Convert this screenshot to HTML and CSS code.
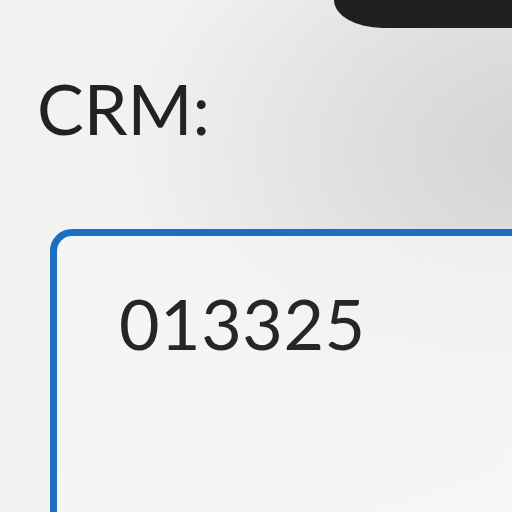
FILE: index.html
```html
<!DOCTYPE html>
<html>
<head>
<meta charset="utf-8">
<link rel="stylesheet" href="styles.css">
</head>
<body>
<div class="page">
  <div class="topbar"><div class="pill"></div></div>
  <label class="label">CRM:</label>
  <div class="field"><span class="value">013325</span></div>
</div>
</body>
</html>
```
FILE: styles.css
```css
html, body {
  margin: 0;
  padding: 0;
  width: 512px;
  height: 512px;
  overflow: hidden;
}
body {
  background-color: #f2f2f2;
  background-image: radial-gradient(ellipse 420px 300px at 540px 150px, #d3d3d3 0%, #dedede 40%, rgba(242,242,242,0) 100%);
  font-family: Lato, "Noto Sans", sans-serif;
  color: #222;
}
.page {
  display: flex;
  flex-direction: column;
}
.topbar {
  display: flex;
  justify-content: flex-end;
  height: 28px;
}
.pill {
  width: 178px;
  height: 28px;
  background: #202020;
  border-bottom-left-radius: 52px 30px;
}
.label {
  display: block;
  font-size: 70px;
  line-height: 1;
  margin: 45px 0 0 37px;
  color: #222;
}
.field {
  margin: 86px 0 0 50px;
  width: 600px;
  height: 400px;
  border: 7px solid #1b6ec0;
  border-radius: 22px;
  background: linear-gradient(160deg, rgba(246,246,246,0.7), rgba(246,246,246,0.9));
  box-sizing: border-box;
  padding: 52px 0 0 62px;
}
.value {
  font-size: 70px;
  line-height: 1;
  color: #262626;
  letter-spacing: 0.5px;
}
```
